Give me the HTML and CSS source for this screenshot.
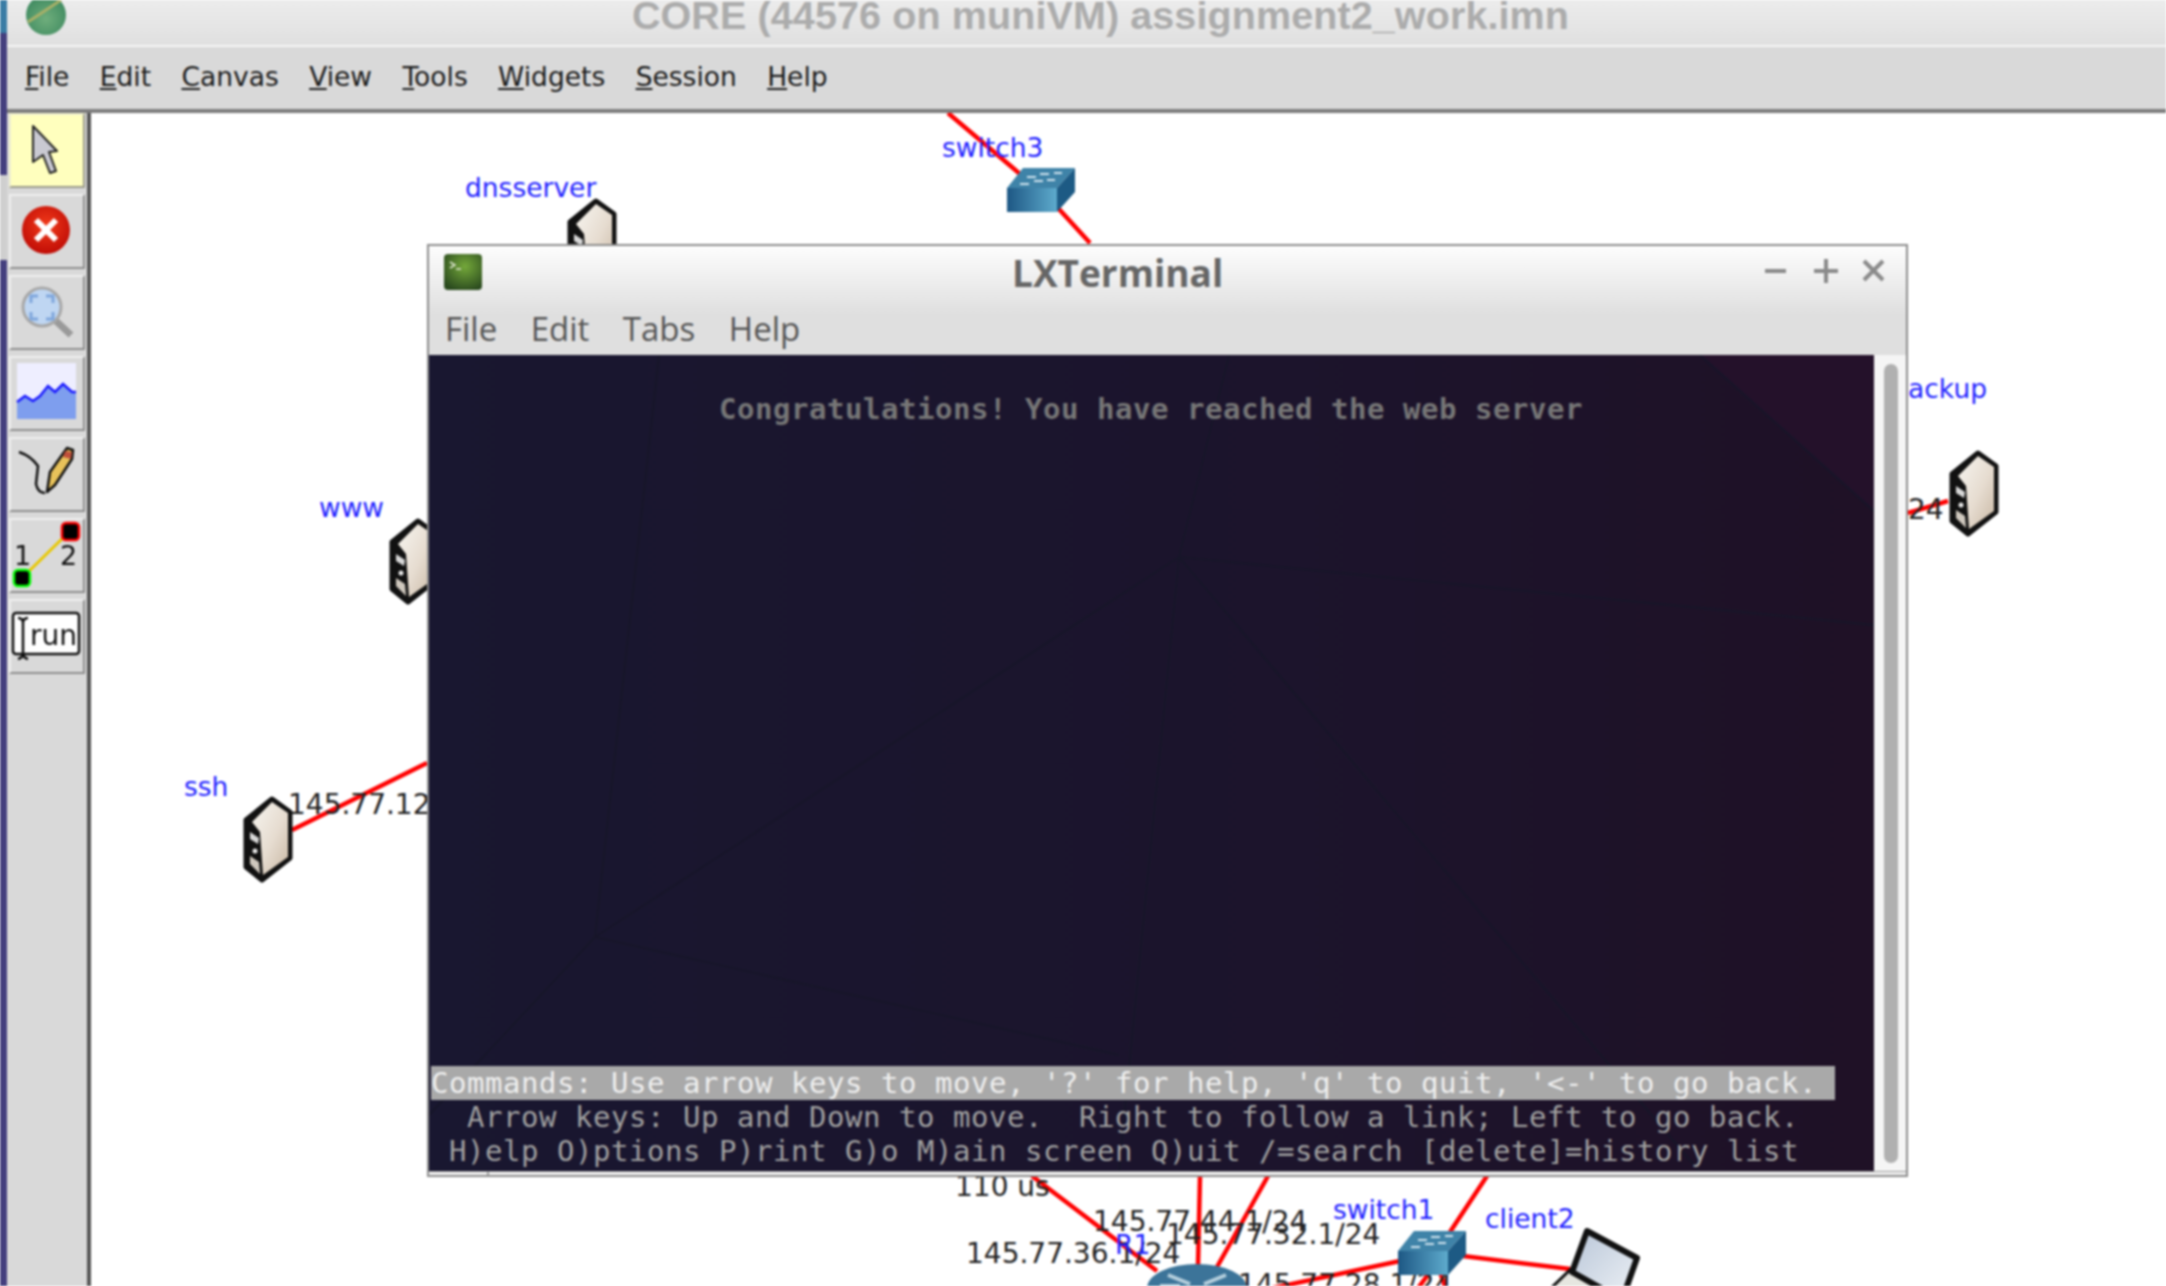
FILE: index.html
```html
<!DOCTYPE html>
<html lang="en">
<head>
    <meta charset="UTF-8">
    <title>CORE (44576 on muniVM) assignment2_work.imn</title>
    <link rel="stylesheet" href="styles.css">
</head>
<body>
<svg class="defs" width="0" height="0">
    <defs>
        <linearGradient id="serverFace" x1="0" y1="0" x2="1" y2="1">
            <stop offset="0" stop-color="#f7f5f0"/>
            <stop offset="0.55" stop-color="#e6dcd0"/>
            <stop offset="1" stop-color="#c9b8a4"/>
        </linearGradient>
        <linearGradient id="switchFront" x1="0" y1="0" x2="1" y2="0">
            <stop offset="0" stop-color="#1d5784"/>
            <stop offset="1" stop-color="#5eabcd"/>
        </linearGradient>
        <radialGradient id="termGreen" cx="0.55" cy="0.35" r="0.7">
            <stop offset="0" stop-color="#74a83a"/>
            <stop offset="1" stop-color="#2a4a1e"/>
        </radialGradient>
        <radialGradient id="stopRed" cx="0.5" cy="0.4" r="0.6">
            <stop offset="0" stop-color="#f23a1a"/>
            <stop offset="1" stop-color="#c00d06"/>
        </radialGradient>
        <radialGradient id="coreBall" cx="0.5" cy="0.6" r="0.6">
            <stop offset="0" stop-color="#6fae7c"/>
            <stop offset="1" stop-color="#3f8a60"/>
        </radialGradient>
        <linearGradient id="laptopScreen" x1="0" y1="0" x2="1" y2="1">
            <stop offset="0" stop-color="#b9c6d8"/>
            <stop offset="1" stop-color="#eef2f6"/>
        </linearGradient>

        <symbol id="server" viewBox="0 0 52 88">
            <polygon points="30,3 48,16 48,62 20,84 4,71 4,24" fill="#111" stroke="#111" stroke-width="5" stroke-linejoin="round"/>
            <polygon points="30,6 46,17 46,61 21,79 18,36 10,26" fill="url(#serverFace)"/>
            <polygon points="8,36 17,42 16,48 8,43" fill="#d8d8d8"/>
            <circle cx="13" cy="55" r="2.5" fill="#e8e8e8"/>
            <polygon points="8,60 17,66 18,78 8,68" fill="#cfc8be"/>
        </symbol>
        <symbol id="netswitch" viewBox="0 0 68 44">
            <polygon points="0,20 16,0 68,0 50,20" fill="#3f83a8"/>
            <polygon points="50,20 68,0 68,24 50,44" fill="#1d5a84"/>
            <rect x="0" y="20" width="50" height="24" fill="url(#switchFront)"/>
            <path d="M20 9h9M33 6h9M47 5h8M13 16h9M27 13h9M40 12h8" stroke="#cfe3ee" stroke-width="2"/>
        </symbol>
    </defs>
</svg>

<div class="screen">
    <div class="desktop-strip"></div>
    <div class="app">
        <div class="app-title">
            <svg class="core-logo" width="42" height="42" viewBox="0 0 42 42">
                <circle cx="21" cy="17" r="20" fill="url(#coreBall)"/>
                <path d="M3 24 L36 2" stroke="#a8b068" stroke-width="3"/>
            </svg>
            <span class="app-title-text">CORE (44576 on muniVM) assignment2_work.imn</span>
        </div>
        <div class="app-menu">
            <span><u>F</u>ile</span>
            <span><u>E</u>dit</span>
            <span><u>C</u>anvas</span>
            <span><u>V</u>iew</span>
            <span><u>T</u>ools</span>
            <span><u>W</u>idgets</span>
            <span><u>S</u>ession</span>
            <span><u>H</u>elp</span>
        </div>
        <div class="app-main">
            <div class="toolbar">
                <div class="tool tool-active">
                    <svg width="76" height="76" viewBox="0 0 76 76">
                        <polygon points="24,13 48,38 40,39 47,58 41,60 34,42 24,49" fill="#c9c9d2" stroke="#222" stroke-width="2" stroke-linejoin="round"/>
                    </svg>
                </div>
                <div class="tool">
                    <svg width="76" height="75" viewBox="0 0 76 75">
                        <circle cx="37" cy="36" r="24" fill="url(#stopRed)"/>
                        <path d="M27 26 L47 46 M47 26 L27 46" stroke="#fff" stroke-width="6"/>
                    </svg>
                </div>
                <div class="tool">
                    <svg width="76" height="75" viewBox="0 0 76 75">
                        <path d="M47 46 L62 60" stroke="#9a9a9a" stroke-width="7"/>
                        <circle cx="33" cy="32" r="19" fill="#bfd6f2" stroke="#a8a8a8" stroke-width="3"/>
                        <path d="M22 28v-7h7M37 21h7v7M44 37v7h-7M29 44h-7v-7" fill="none" stroke="#7fa6dc" stroke-width="3"/>
                    </svg>
                </div>
                <div class="tool">
                    <svg width="76" height="75" viewBox="0 0 76 75">
                        <rect x="8" y="7" width="59" height="56" fill="#eeeeff"/>
                        <polygon points="8,46 16,40 24,45 31,40 39,30 46,36 54,28 63,36 67,36 67,63 8,63" fill="#7e9eee"/>
                        <polyline points="8,46 16,40 24,45 31,40 39,30 46,36 54,28 63,36 67,36" fill="none" stroke="#1a1aff" stroke-width="2.5"/>
                    </svg>
                </div>
                <div class="tool">
                    <svg width="76" height="75" viewBox="0 0 76 75">
                        <path d="M10 15 Q22 19 29 29 L27 47 Q29 56 36 56" fill="none" stroke="#111" stroke-width="2.5"/>
                        <polygon points="38,55 41,35 58,11 64,13 63,22 46,48" fill="#e8c25a" stroke="#111" stroke-width="2.5" stroke-linejoin="round"/>
                        <polygon points="56,14 63,15 62,22 54,20" fill="#c0503c"/>
                    </svg>
                </div>
                <div class="tool">
                    <svg width="76" height="75" viewBox="0 0 76 75">
                        <path d="M13 60 L61 13" stroke="#e8c800" stroke-width="3"/>
                        <rect x="53" y="5" width="17" height="17" rx="4" fill="#000" stroke="#f00" stroke-width="2.5"/>
                        <rect x="5" y="52" width="16" height="16" rx="4" fill="#000" stroke="#0f0" stroke-width="2.5"/>
                        <text class="tool-digit" x="5" y="47">1</text>
                        <text class="tool-digit" x="51" y="47">2</text>
                    </svg>
                </div>
                <div class="tool">
                    <svg width="76" height="75" viewBox="0 0 76 75">
                        <rect x="4" y="14" width="66" height="41" rx="3" fill="#fff" stroke="#111" stroke-width="2.5"/>
                        <path d="M9 19 Q14 19 14 24 V53 Q14 59 9 60 M19 19 Q14 19 14 24 M14 53 Q14 59 19 60" fill="none" stroke="#111" stroke-width="2.5"/>
                        <text class="tool-run" x="21" y="46">run</text>
                    </svg>
                </div>
            </div>

            <div class="canvas">
                <!-- topology, drawn in screen coordinates -->
                <svg class="topology" width="2075" height="1173" viewBox="91 113 2075 1173">
                    <g class="links">
                        <line x1="948" y1="113" x2="1020" y2="174"/>
                        <line x1="1058" y1="208" x2="1090" y2="243"/>
                        <line x1="292" y1="830" x2="427" y2="763"/>
                        <line x1="1908" y1="513" x2="1948" y2="501"/>
                        <line x1="1032" y1="1176" x2="1157" y2="1271"/>
                        <line x1="1200" y1="1176" x2="1198" y2="1266"/>
                        <line x1="1268" y1="1176" x2="1217" y2="1267"/>
                        <line x1="1487" y1="1176" x2="1450" y2="1232"/>
                        <line x1="1463" y1="1256" x2="1570" y2="1269"/>
                        <line x1="1400" y1="1261" x2="1240" y2="1295"/>
                        <line x1="1430" y1="1272" x2="1413" y2="1295"/>
                        <line x1="1440" y1="1272" x2="1448" y2="1295"/>
                    </g>
                    <g class="addr">
                        <text x="288" y="814">145.77.12</text>
                        <text x="1908" y="519">24</text>
                        <text x="955" y="1196">110 us</text>
                        <text x="1093" y="1231">145.77.44.1/24</text>
                        <text x="1166" y="1244">145.77.32.1/24</text>
                        <text x="966" y="1263">145.77.36.1/24</text>
                        <text x="1238" y="1294">145.77.28.1/24</text>
                    </g>
                    <g class="names">
                        <text x="465" y="197">dnsserver</text>
                        <text x="942" y="157">switch3</text>
                        <text x="319" y="517">www</text>
                        <text x="184" y="796">ssh</text>
                        <text x="1987" y="398" text-anchor="end">backup</text>
                        <text x="1115" y="1254">R1</text>
                        <text x="1333" y="1219">switch1</text>
                        <text x="1485" y="1228">client2</text>
                    </g>
                    <use href="#server" x="566" y="198" width="52" height="88"/>
                    <use href="#server" x="388" y="518" width="52" height="88"/>
                    <use href="#server" x="242" y="796" width="52" height="88"/>
                    <use href="#server" x="1948" y="450" width="52" height="88"/>
                    <use href="#netswitch" x="1007" y="168" width="68" height="44"/>
                    <use href="#netswitch" x="1398" y="1231" width="68" height="44"/>
                    <!-- router -->
                    <ellipse cx="1197" cy="1288" rx="50" ry="24" fill="#3c7499"/>
                    <path d="M1168 1275 L1190 1284 M1226 1275 L1204 1284 M1180 1286 L1160 1286" stroke="#b5cfdd" stroke-width="4"/>
                    <!-- laptop -->
                    <polygon points="1547,1292 1574,1266 1630,1292" fill="#e6e6e0" stroke="#111" stroke-width="3"/>
                    <polygon points="1587,1231 1637,1258 1622,1300 1572,1272" fill="url(#laptopScreen)" stroke="#111" stroke-width="6" stroke-linejoin="round"/>
                </svg>

                <div class="lxterm">
                    <div class="lx-title">
                        <svg class="lx-icon" width="38" height="36" viewBox="0 0 38 36">
                            <rect width="38" height="36" rx="4" fill="url(#termGreen)"/>
                            <path d="M6 8l5 3-5 3M12 15h5" fill="none" stroke="#dfe8d0" stroke-width="1.5"/>
                        </svg>
                        <span class="lx-title-text">LXTerminal</span>
                        <div class="lx-buttons">
                            <svg width="122" height="24" viewBox="0 0 122 24">
                                <path d="M0 12h21M49 12h24M61 0v24M99 2l19 19M118 2l-19 19" stroke="#8a8a8a" stroke-width="4"/>
                            </svg>
                        </div>
                    </div>
                    <div class="lx-menu">
                        <span>File</span>
                        <span>Edit</span>
                        <span>Tabs</span>
                        <span>Help</span>
                    </div>
                    <div class="lx-body">
                        <div class="term">
                            <svg class="term-bg" width="1445" height="816" viewBox="0 0 1445 816">
                                <polygon points="1271,0 1445,0 1445,156" fill="#24112a"/>
                                <g fill="none" stroke="#171629" stroke-width="2">
                                    <path d="M1271 0 L1445 156"/>
                                    <path d="M750 202 L800 0 M750 202 L1445 270 M750 202 L166 582 M750 202 L690 816 M750 202 L1270 816"/>
                                    <path d="M166 582 L230 0 M166 582 L0 760 M166 582 L690 700"/>
                                </g>
                            </svg>
                            <pre class="term-head">                Congratulations! You have reached the web server</pre>
                            <div class="term-status">
                                <pre class="status-bar">Commands: Use arrow keys to move, '?' for help, 'q' to quit, '&lt;-' to go back.</pre>
                                <pre>  Arrow keys: Up and Down to move.  Right to follow a link; Left to go back.</pre>
                                <pre> H)elp O)ptions P)rint G)o M)ain screen Q)uit /=search [delete]=history list</pre>
                            </div>
                        </div>
                        <div class="lx-scroll"><div class="lx-thumb"></div></div>
                    </div>
                    <div class="lx-hscroll"><div class="lx-grip"></div></div>
                </div>
            </div>
        </div>
    </div>
</div>
</body>
</html>
```

FILE: styles.css
```css
html, body {
    margin: 0;
    height: 100%;
    overflow: hidden;
    background: #fff;
}
.defs {
    position: absolute;
}
.screen {
    display: flex;
    width: 2166px;
    height: 1286px;
    overflow: hidden;
    filter: blur(0.8px);
}
.desktop-strip {
    width: 7px;
    flex: none;
    background: linear-gradient(#3a7ca5 0, #3a7ca5 33px, #443f7e 33px, #443f7e 175px, #cfcfcf 175px, #cfcfcf 260px, #443f7e 260px);
}
.app {
    flex: 1;
    display: flex;
    flex-direction: column;
    min-width: 0;
}
.app-title {
    height: 45px;
    flex: none;
    position: relative;
    display: flex;
    justify-content: center;
    align-items: center;
    overflow: hidden;
    background: linear-gradient(#ececec, #e0e0e0);
    border-bottom: 2px solid #f6f6f6;
}
.core-logo {
    position: absolute;
    left: 18px;
    top: -2px;
}
.app-title-text {
    font: bold 39.5px "Liberation Sans", sans-serif;
    color: #acacac;
    margin-top: -15px;
    margin-left: 28px;
    letter-spacing: 0.1px;
}
.app-menu {
    height: 58px;
    flex: none;
    display: flex;
    align-items: center;
    gap: 30.4px;
    padding: 0 0 4px 18px;
    background: #d9d9d9;
    border-bottom: 4px solid #7d7d7d;
    font: 26.5px "DejaVu Sans", sans-serif;
    color: #1c1c1c;
}
.app-main {
    flex: 1;
    display: flex;
    min-height: 0;
}
.toolbar {
    width: 84px;
    flex: none;
    box-sizing: border-box;
    padding: 0 0 0 2px;
    display: flex;
    flex-direction: column;
    gap: 6px;
    background: #d9d9d9;
    border-right: 4px solid #555;
}
.tool {
    width: 76px;
    height: 75px;
    box-sizing: border-box;
    border: 2px solid;
    border-color: #efefef #8e8e8e #8e8e8e #efefef;
    background: #d9d9d9;
    overflow: hidden;
}
.tool svg {
    display: block;
    margin: -2px;
}
.tool-active {
    background: #ffffbe;
    border-color: #efefd0 #9a9a8a #9a9a8a #efefd0;
}
.tool-digit {
    font: 27px "DejaVu Sans", sans-serif;
    fill: #111;
}
.tool-run {
    font: 28px "DejaVu Sans", sans-serif;
    fill: #111;
}
.canvas {
    flex: 1;
    position: relative;
    background: #fff;
    overflow: hidden;
}
.topology {
    display: block;
}
.links line {
    stroke: #f00;
    stroke-width: 4.5;
}
.addr text {
    font: 28px "DejaVu Sans", sans-serif;
    fill: #222;
}
.names text {
    font: 26.5px "DejaVu Sans", sans-serif;
    fill: #2323ff;
}

/* terminal window floating over the canvas */
.lxterm {
    position: absolute;
    left: 336px;
    top: 131px;
    width: 1481px;
    height: 933px;
    box-sizing: border-box;
    border: 2px solid #8c8c8c;
    display: flex;
    flex-direction: column;
    background: #dfdfdf;
}
.lx-title {
    height: 69px;
    flex: none;
    display: flex;
    align-items: center;
    background: linear-gradient(#fdfdfd, #dfdfdf);
    position: relative;
}
.lx-icon {
    position: absolute;
    left: 15px;
    top: 8px;
}
.lx-title-text {
    margin-left: 583px;
    margin-top: -17px;
    font: bold 37px "Open Sans", sans-serif;
    color: #666;
}
.lx-buttons {
    position: absolute;
    right: 19px;
    top: 13px;
}
.lx-buttons svg {
    display: block;
}
.lx-menu {
    height: 40px;
    flex: none;
    box-sizing: border-box;
    display: flex;
    align-items: center;
    gap: 33.5px;
    padding: 0 0 14px 16px;
    background: #dfdfdf;
    font: 33px "Open Sans", sans-serif;
    color: #555;
}
.lx-body {
    flex: 1;
    min-height: 0;
    display: flex;
}
.term {
    width: 1445px;
    flex: none;
    position: relative;
    overflow: hidden;
    box-sizing: border-box;
    padding: 37px 0 3px 2px;
    display: flex;
    flex-direction: column;
    background: linear-gradient(90deg, #191730, #1c142c 60%, #1f1126);
}
.term-bg {
    position: absolute;
    left: 0;
    top: 0;
}
.term pre {
    position: relative;
    margin: 0;
    height: 34px;
    font: 29px/34px "DejaVu Sans Mono", monospace;
    letter-spacing: 0.54px;
    color: #a0a0a0;
}
.term .term-head {
    font-weight: bold;
    color: #767676;
}
.term-status {
    margin-top: auto;
}
.term .status-bar {
    width: 1404px;
    background: #a9a9a9;
    color: #efefef;
}
.lx-scroll {
    flex: 1;
    padding: 9px 0 8px 10px;
    background: #f5f5f5;
    display: flex;
}
.lx-thumb {
    width: 14px;
    border-radius: 7px;
    background: #b0b0b0;
}
.lx-hscroll {
    height: 3px;
    flex: none;
    background: #f0f0f0;
    border-top: 1px solid #9a9a9a;
}
.lx-grip {
    width: 58px;
    height: 3px;
    border-right: 2px solid #9a9a9a;
}
```
